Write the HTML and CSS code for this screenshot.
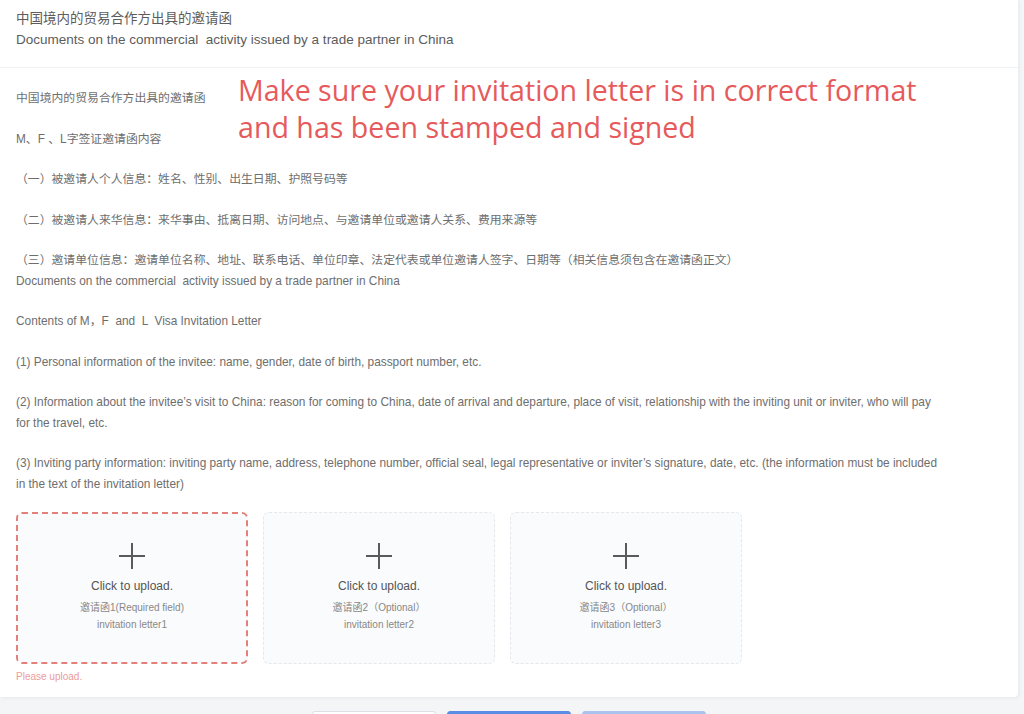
FILE: index.html
```html
<!DOCTYPE html>
<html lang="en">
<head>
    <meta charset="UTF-8">
    <meta name="viewport" content="width=device-width, initial-scale=1.0">
    <title>邀请函</title>
    <link rel="stylesheet" href="styles.css">
</head>
<body>

    <div class="page">
        <!-- Thẻ chính -->
        <div class="card">
            <div class="card-head">
                <div class="title-cn">中国境内的贸易合作方出具的邀请函</div>
                <div class="title-en">Documents on the commercial  activity issued by a trade partner in China</div>
            </div>

            <div class="card-body">
                <!-- Ghi chú màu đỏ đè lên nội dung -->
                <div class="note">Make sure your invitation letter is in correct format<br>and has been stamped and signed</div>

                <div class="desc">
                    <p>中国境内的贸易合作方出具的邀请函</p>
                    <p>M、F 、L字签证邀请函内容</p>
                    <p>（一）被邀请人个人信息：姓名、性别、出生日期、护照号码等</p>
                    <p>（二）被邀请人来华信息：来华事由、抵离日期、访问地点、与邀请单位或邀请人关系、费用来源等</p>
                    <p class="tight">（三）邀请单位信息：邀请单位名称、地址、联系电话、单位印章、法定代表或单位邀请人签字、日期等（相关信息须包含在邀请函正文）</p>
                    <p>Documents on the commercial  activity issued by a trade partner in China</p>
                    <p>Contents of M，F  and  L  Visa Invitation Letter</p>
                    <p>(1) Personal information of the invitee: name, gender, date of birth, passport number, etc.</p>
                    <p>(2) Information about the invitee’s visit to China: reason for coming to China, date of arrival and departure, place of visit, relationship with the inviting unit or inviter, who will pay for the travel, etc.</p>
                    <p>(3) Inviting party information: inviting party name, address, telephone number, official seal, legal representative or inviter’s signature, date, etc. (the information must be included in the text of the invitation letter)</p>
                </div>

                <!-- Ô tải ảnh lên -->
                <div class="uploads">
                    <div class="upload-box error-box">
                        <svg class="plus" viewBox="0 0 28 28"><path d="M14 1V27M1 14H27"/></svg>
                        <div class="upload-text">Click to upload.</div>
                        <div class="upload-sub">邀请函1(Required field)</div>
                        <div class="upload-sub">invitation letter1</div>
                    </div>
                    <div class="upload-box">
                        <svg class="plus" viewBox="0 0 28 28"><path d="M14 1V27M1 14H27"/></svg>
                        <div class="upload-text">Click to upload.</div>
                        <div class="upload-sub">邀请函2（Optional）</div>
                        <div class="upload-sub">invitation letter2</div>
                    </div>
                    <div class="upload-box">
                        <svg class="plus" viewBox="0 0 28 28"><path d="M14 1V27M1 14H27"/></svg>
                        <div class="upload-text">Click to upload.</div>
                        <div class="upload-sub">邀请函3（Optional）</div>
                        <div class="upload-sub">invitation letter3</div>
                    </div>
                </div>
                <div class="error-msg">Please upload.</div>
            </div>
        </div>

        <!-- Thanh nút phía dưới -->
        <div class="footer">
            <button class="btn btn-plain">Back</button>
            <button class="btn btn-primary">Save</button>
            <button class="btn btn-light">Next</button>
        </div>
    </div>

</body>
</html>
```

FILE: styles.css
```css
html, body {
    overflow: hidden;
}

body {
    margin: 0;
    background-color: #f4f5f7;
    font-family: "Liberation Sans", Arial, "Noto Sans CJK SC", sans-serif;
    color: #6e6e6e;
}

/* Khung trang */
.page {
    padding-right: 6px;
}

.card {
    background-color: #fff;
    border-radius: 0 0 4px 0;
    box-shadow: 1px 1px 4px rgba(0, 0, 0, 0.06);
}

/* Tiêu đề */
.card-head {
    padding: 8px 16px 17px;
    border-bottom: 1px solid #f0f1f3;
    color: #5c5c5c;
    font-size: 13.5px;
    line-height: 21px;
}

.title-en {
    white-space: pre-wrap;
}

.card-body {
    position: relative;
    padding: 20px 16px 12px;
}

/* Ghi chú màu đỏ */
.note {
    position: absolute;
    left: 238px;
    top: 3px;
    color: #e65a5c;
    font-family: "Open Sans", sans-serif;
    font-size: 28.6px;
    line-height: 37px;
}

/* Nội dung mô tả */
.desc {
    width: 928px;
    font-size: 11.85px;
    line-height: 20.3px;
}

.desc p {
    margin: 0 0 20.3px;
    white-space: pre-wrap;
}

.desc p.tight {
    margin-bottom: 0;
}

.desc p:last-child {
    margin-bottom: 0;
}

/* Ô tải lên */
.uploads {
    display: flex;
    gap: 15px;
    margin-top: 18px;
}

.upload-box {
    width: 232px;
    height: 152px;
    box-sizing: border-box;
    border: 1px dashed #e4e8ed;
    border-radius: 6px;
    background-color: #fafbfc;
    display: flex;
    flex-direction: column;
    align-items: center;
    padding-top: 29px;
}

.error-box {
    border: 2px dashed #e3807a;
    padding-top: 28px;
}

.plus {
    width: 28px;
    height: 28px;
    stroke: #5a5a5a;
    stroke-width: 2;
    fill: none;
}

.upload-text {
    margin-top: 7px;
    color: #555;
    font-size: 12px;
    line-height: 18px;
}

.upload-sub {
    color: #888;
    font-size: 10px;
    line-height: 17px;
}

.upload-text + .upload-sub {
    margin-top: 4px;
}

.error-msg {
    margin-top: 5px;
    color: #eb9c9c;
    font-size: 10px;
    line-height: 16px;
}

/* Thanh nút */
.footer {
    display: flex;
    justify-content: center;
    gap: 11px;
    padding-top: 14px;
}

.btn {
    width: 124px;
    height: 32px;
    border-radius: 3px;
    font-size: 13px;
    font-family: inherit;
}

.btn-plain {
    background-color: #fff;
    border: 1px solid #dcdfe6;
}

.btn-primary {
    background-color: #5b8de6;
    border: 1px solid #5b8de6;
    color: #fff;
}

.btn-light {
    background-color: #a9c2ee;
    border: 1px solid #a9c2ee;
    color: #fff;
}
```
